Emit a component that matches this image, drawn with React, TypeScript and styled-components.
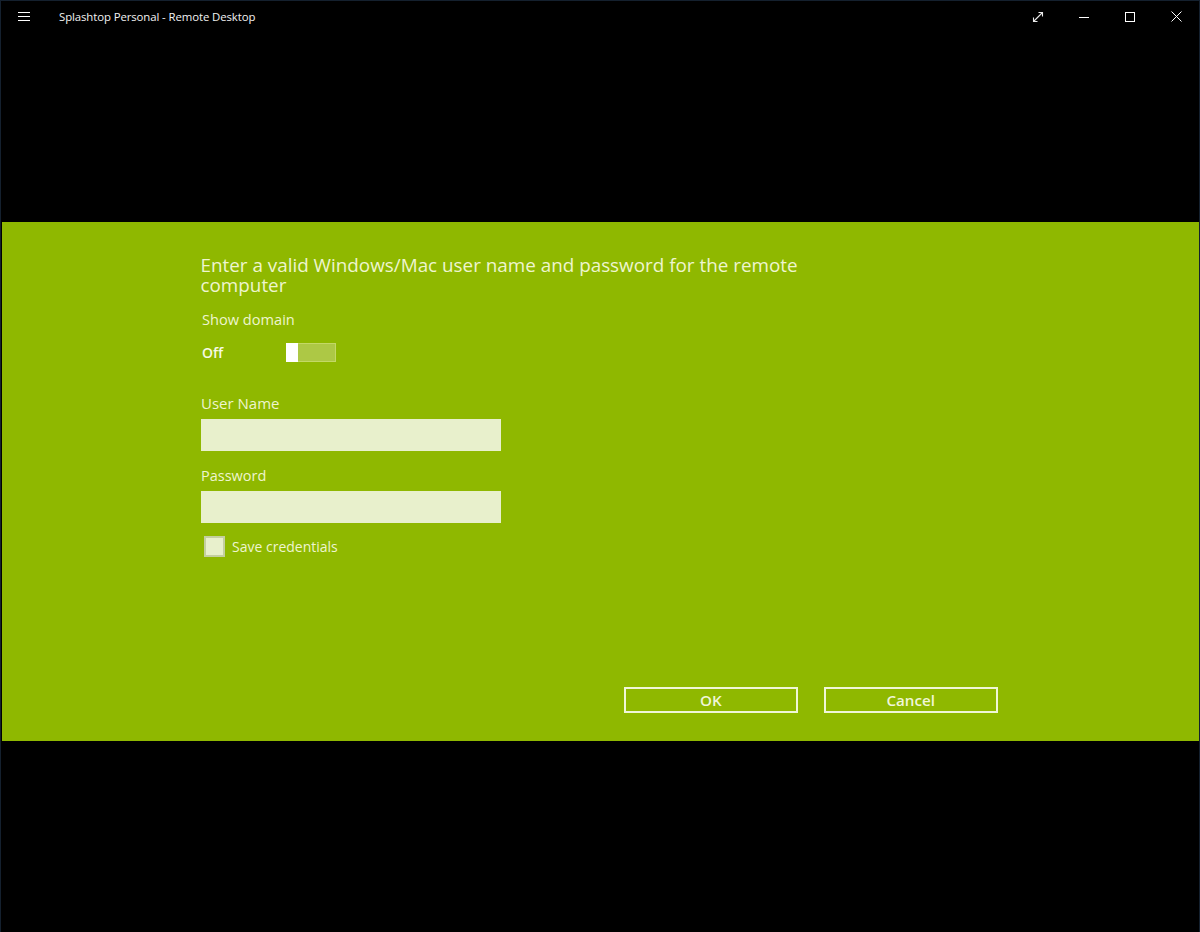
import { FC } from "react";
import styled, { createGlobalStyle } from "styled-components";

const GlobalStyle = createGlobalStyle`
  html, body {
    margin: 0;
    padding: 0;
    background: #000;
    overflow: hidden;
  }
  body {
    font-family: "Open Sans", "Noto Sans", "Liberation Sans", sans-serif;
  }
`;

const Window = styled.div`
  width: 1200px;
  height: 932px;
  box-sizing: border-box;
  border: 1px solid #14202e;
  border-bottom: none;
  background: #000;
  display: flex;
  flex-direction: column;
`;

const TitleBar = styled.header`
  height: 221px;
  flex: none;
  display: flex;
  align-items: flex-start;
  color: #fff;
`;

const TitleRow = styled.div`
  flex: 1;
  height: 31px;
  display: flex;
  align-items: center;
`;

const MenuButton = styled.div`
  width: 46px;
  height: 31px;
  flex: none;
  padding-left: 17px;
  margin-right: 12px;
  box-sizing: border-box;
  display: flex;
  align-items: center;
`;

const AppTitle = styled.div`
  flex: 1;
  font-size: 11.4px;
  color: #f2f2f2;
  letter-spacing: -0.1px;
  white-space: nowrap;
`;

const WindowButton = styled.div`
  width: 46px;
  height: 31px;
  display: flex;
  align-items: center;
  justify-content: center;
`;

const Band = styled.main`
  height: 519px;
  flex: none;
  margin-left: 1px;
  background: #8fb800;
  box-sizing: border-box;
  padding: 33px 0 0 199px;
  color: #eef5cf;
  display: flex;
  flex-direction: column;
`;

const Heading = styled.h1`
  margin: 0 0 0 -0.5px;
  width: 640px;
  font-size: 18.85px;
  font-weight: 400;
  line-height: 20px;
  color: #eef5cf;
`;

const ToggleCaption = styled.div`
  margin: 13px 0 0 1px;
  font-size: 14.6px;
  line-height: 22px;
`;

const ToggleRow = styled.div`
  margin: 12px 0 0 1px;
  height: 20px;
  display: flex;
  align-items: center;
`;

const ToggleState = styled.span`
  width: 84px;
  font-size: 14px;
  font-weight: 600;
  color: #f6fae6;
`;

const Toggle = styled.div`
  width: 50px;
  height: 19px;
  box-sizing: border-box;
  border: 1px solid #c3d866;
  background: #adc845;
  display: flex;
`;

const ToggleKnob = styled.div`
  width: 12px;
  margin: -1px 0 -1px -1px;
  background: #fff;
`;

const FieldLabel = styled.label<{ $top: number; $gap: number; $size: number }>`
  display: block;
  margin-top: ${(props) => props.$top}px;
  margin-bottom: ${(props) => props.$gap}px;
  font-size: ${(props) => props.$size}px;
  line-height: 22px;
`;

const TextField = styled.input`
  display: block;
  width: 300px;
  height: 32px;
  margin: 0;
  padding: 0;
  box-sizing: border-box;
  border: none;
  background: #e8f0cc;
`;

const CheckRow = styled.div`
  margin: 12px 0 0 4px;
  height: 22px;
  display: flex;
  align-items: center;
  gap: 6px;
`;

const CheckBox = styled.div`
  width: 21px;
  height: 21px;
  margin-left: -1px;
  margin-right: 1px;
  box-sizing: border-box;
  border: 2px solid #c4cfa0;
  background: #e8f0cc;
`;

const CheckLabel = styled.span`
  font-size: 14px;
`;

const Actions = styled.div`
  margin: 130px 0 0 423px;
  display: flex;
  gap: 26.5px;
`;

const ActionButton = styled.button`
  width: 173.5px;
  height: 26px;
  box-sizing: border-box;
  padding: 0;
  border: 2px solid #f0f6d8;
  background: transparent;
  color: #f0f6d8;
  font-family: inherit;
  font-size: 15.2px;
  font-weight: 600;
  line-height: 22px;
`;

const HamburgerIcon: FC = () => (
  <svg width="13" height="11" viewBox="0 0 13 11" fill="none" stroke="#fff" strokeWidth="1">
    <path d="M0 1.5h12M0 5.5h12M0 9.5h12" />
  </svg>
);

const ExpandIcon: FC = () => (
  <svg width="12" height="12" viewBox="0 0 12 12" fill="none" stroke="#e8e8e8" strokeWidth="1.1">
    <path d="M1.5 10.5 10.5 1.5M6.5 1.5h4v4M1.5 6.5v4h4" />
  </svg>
);

const MinimizeIcon: FC = () => (
  <svg width="10" height="10" viewBox="0 0 10 10" fill="none" stroke="#fff" strokeWidth="1">
    <path d="M0 5.5h10" />
  </svg>
);

const MaximizeIcon: FC = () => (
  <svg width="10" height="10" viewBox="0 0 10 10" fill="none" stroke="#fff" strokeWidth="1">
    <rect x="0.5" y="0.5" width="9" height="9" />
  </svg>
);

const CloseIcon: FC = () => (
  <svg width="11" height="11" viewBox="0 0 11 11" fill="none" stroke="#fff" strokeWidth="1">
    <path d="M.5.5l10 10M10.5.5l-10 10" />
  </svg>
);

const App: FC = () => {
  return (
    <>
      <GlobalStyle />
      <Window>
        <TitleBar>
          <TitleRow>
            <MenuButton>
              <HamburgerIcon />
            </MenuButton>
            <AppTitle>Splashtop Personal - Remote Desktop</AppTitle>
            <WindowButton>
              <ExpandIcon />
            </WindowButton>
            <WindowButton>
              <MinimizeIcon />
            </WindowButton>
            <WindowButton>
              <MaximizeIcon />
            </WindowButton>
            <WindowButton>
              <CloseIcon />
            </WindowButton>
          </TitleRow>
        </TitleBar>
        <Band>
          <Heading>Enter a valid Windows/Mac user name and password for the remote computer</Heading>
          <ToggleCaption>Show domain</ToggleCaption>
          <ToggleRow>
            <ToggleState>Off</ToggleState>
            <Toggle>
              <ToggleKnob />
            </Toggle>
          </ToggleRow>
          <FieldLabel $top={30} $gap={5} $size={15}>User Name</FieldLabel>
          <TextField aria-label="User Name" />
          <FieldLabel $top={14} $gap={4} $size={14.5}>Password</FieldLabel>
          <TextField aria-label="Password" type="password" />
          <CheckRow>
            <CheckBox />
            <CheckLabel>Save credentials</CheckLabel>
          </CheckRow>
          <Actions>
            <ActionButton>OK</ActionButton>
            <ActionButton>Cancel</ActionButton>
          </Actions>
        </Band>
      </Window>
    </>
  );
};

export default App;
